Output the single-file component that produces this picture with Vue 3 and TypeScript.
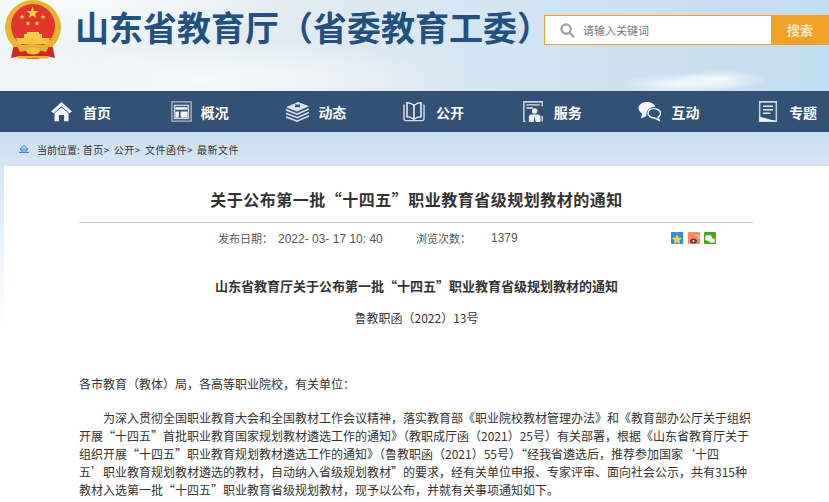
<script setup lang="ts">
const navItems = [
  { label: '首页', icon: 'home', width: 21, gap: 11 },
  { label: '概况', icon: 'window', width: 21, gap: 9 },
  { label: '动态', icon: 'stack', width: 24, gap: 9 },
  { label: '公开', icon: 'book', width: 24, gap: 10 },
  { label: '服务', icon: 'person', width: 20, gap: 11 },
  { label: '互动', icon: 'chat', width: 23, gap: 10 },
  { label: '专题', icon: 'doc', width: 20, gap: 11 },
]
const crumbs = ['首页>', '公开>', '文件函件>', '最新文件']

// five pointed star for the emblem, outer radius r
function star(cx: number, cy: number, r: number): string {
  const pts: string[] = []
  for (let i = 0; i < 10; i++) {
    const rad = i % 2 === 0 ? r : r * 0.4
    const a = (Math.PI / 5) * i - Math.PI / 2
    pts.push(`${(cx + rad * Math.cos(a)).toFixed(2)},${(cy + rad * Math.sin(a)).toFixed(2)}`)
  }
  return pts.join(' ')
}
const smallStars = [
  [22, 17],
  [43, 17],
  [28, 23.5],
  [37, 23.5],
]
</script>

<template>
  <div class="page" lang="zh-CN">
    <header class="top">
      <div class="brand">
        <svg class="emblem" viewBox="5 0 56 60" width="56" height="60">
          <path d="M14 44 L11 58 L20 56 L28 59 L38 59 L46 56 L55 58 L52 44 Z" fill="#cf2a20" />
          <path d="M5 28 A28 28 0 1 1 61 28 Q60 40 52 47 L14 47 Q6 40 5 28 Z" fill="#e8b233" />
          <circle cx="33" cy="26" r="22" fill="#e2352b" />
          <polygon :points="star(32.5, 13, 6.5)" fill="#f6d04a" />
          <polygon v-for="s in smallStars" :key="s.join()" :points="star(s[0], s[1], 2.8)" fill="#f6d04a" />
          <path d="M27 32 H39 V34 H42 V38 H24 V34 H27 Z" fill="#f6d04a" />
          <path d="M16 38 H50 L48 44 H18 Z" fill="#f3c642" />
          <path d="M17 46 Q33 42 49 46 L46 52 Q33 48 20 52 Z" fill="#e8b233" />
          <ellipse cx="33" cy="51" rx="7" ry="3.5" fill="#f1c33c" />
          <rect x="18" y="56" width="30" height="2.500" fill="#e8b233" />
        </svg>
        <h1 class="site-name">山东省教育厅（省委教育工委）</h1>
      </div>
      <div class="search">
        <svg class="search-icon" viewBox="0 0 16 16" width="15" height="15">
          <circle cx="6.500" cy="6.500" r="5" fill="none" stroke="#a3a3a3" stroke-width="2.500" />
          <line x1="10.500" y1="10.500" x2="15" y2="15" stroke="#a3a3a3" stroke-width="2.500" />
        </svg>
        <span class="search-text">请输入关键词</span>
        <span class="search-btn">搜索</span>
      </div>
    </header>
    <nav class="nav">
      <a v-for="item in navItems" :key="item.label" class="nav-item">
        <span class="nav-slot">
          <svg
            viewBox="0 0 24 24"
            preserveAspectRatio="none"
            height="21"
            :width="item.width"
            :style="{ marginRight: item.gap + 'px' }"
          >
            <template v-if="item.icon === 'home'">
              <path d="M12 1 L24 12 L21 14 L12 6 L3 14 L0 12 Z" fill="#f2f4f6" />
              <path d="M4 14 L12 7.500 L20 14 V23 H15 V16 H9 V23 H4 Z" fill="#f2f4f6" />
            </template>
            <template v-else-if="item.icon === 'window'">
              <rect x="1" y="1" width="22" height="22" fill="none" stroke="#aebac6" stroke-width="1.500" />
              <rect x="4" y="5" width="16" height="15" fill="none" stroke="#cfd6de" stroke-width="1.500" />
              <rect x="5" y="7" width="14" height="3" fill="#f2f4f6" />
              <rect x="5" y="12" width="4" height="7" fill="#f2f4f6" />
              <rect x="11" y="12" width="8" height="7" fill="#f2f4f6" />
            </template>
            <template v-else-if="item.icon === 'stack'">
              <path d="M13 1 L24 6 L12 12 L1 7 Z" fill="#dfe4ea" />
              <path d="M1 10 L12 15 L24 9 M1 14 L12 19 L24 13 M1 18 L12 23 L24 17" fill="none" stroke="#dfe4ea" stroke-width="1.800" />
              <rect x="10" y="4" width="5" height="3" fill="#33527a" />
            </template>
            <template v-else-if="item.icon === 'book'">
              <path d="M2 4 V20 Q2 22.500 4.500 22.500 H19.500 Q22 22.500 22 20 V4" fill="none" stroke="#cfd6de" stroke-width="1.500" />
              <path d="M5 2 Q9 2 12 5 Q15 2 19 2 V18 Q15 18 12 21 Q9 18 5 18 Z M12 5 V21" fill="none" stroke="#e6eaee" stroke-width="1.600" />
            </template>
            <template v-else-if="item.icon === 'person'">
              <path d="M3 23.500 H1 V1 H23 V6 M23 17 V23.500" fill="none" stroke="#cfd6de" stroke-width="1.800" />
              <path d="M4 4.500 H20 M4 8 H12" stroke="#dfe4ea" stroke-width="1.500" />
              <circle cx="14" cy="11.500" r="3.200" fill="#f2f4f6" />
              <path d="M7 24 V18 Q7 15.500 10 15.500 H18 Q21 15.500 21 18 V24 H15.200 L14 17 L12.800 24 Z" fill="#f2f4f6" />
            </template>
            <template v-else-if="item.icon === 'chat'">
              <path d="M9.500 1 C14 1 18 4 18 6.500 C13 6.500 8 10 9 17 L3 20 L4.500 14.500 C2 13 0.500 10.500 0.500 8 C0.500 4 4.500 1 9.500 1 Z" fill="#f2f4f6" />
              <path d="M16 8.500 C20 8.500 23.500 11 23.500 14 C23.500 16 22.500 17.500 21 18.500 L22 22 L17.500 19.500 C13.500 19.500 10.500 17 10.500 14 C10.500 11 13 8.500 16 8.500 Z" fill="none" stroke="#eef1f4" stroke-width="1.600" />
            </template>
            <template v-else>
              <path d="M2 1 H22 V23 H2 Z" fill="none" stroke="#cfd6de" stroke-width="1.800" />
              <path d="M6 6 H18 M6 10 H18 M6 14 H15" stroke="#e6eaee" stroke-width="1.600" />
              <path d="M2 18 L22 23 H2 Z" fill="#f2f4f6" />
            </template>
          </svg>
        </span>
        <span>{{ item.label }}</span>
      </a>
    </nav>
    <div class="crumbs">
      <svg viewBox="0 0 10 8" width="10" height="8" class="crumb-icon">
        <path d="M5 0.500 L9 4 H1 Z M2 4 V6 H8 V4 M0 7.500 H10" fill="none" stroke="#3b87c9" stroke-width="1" />
      </svg>
      <span class="crumb-label">当前位置:</span>
      <span v-for="c in crumbs" :key="c" class="crumb">{{ c }}</span>
    </div>
    <main class="article">
      <h2 class="title">关于公布第一批“十四五”职业教育省级规划教材的通知</h2>
      <div class="meta">
        <span class="date">发布日期：<span class="stamp">2022- 03- 17 10: 40</span></span>
        <span class="views">浏览次数：</span>
        <span class="count">1379</span>
        <span class="share">
          <i class="share-icon qzone"><svg viewBox="0 0 12 12" width="12" height="12"><polygon points="6,1 7.500,4.500 11,5 8.500,7.500 9,11 6,9.200 3,11 3.500,7.500 1,5 4.500,4.500" fill="#f6d24a" /></svg></i>
          <i class="share-icon weibo"><svg viewBox="0 0 12 12" width="12" height="12"><ellipse cx="5.500" cy="8" rx="3.500" ry="2.500" fill="#5d3a3a" /><circle cx="5.500" cy="8" r="1" fill="#fff" /><path d="M7.500 2.500 H10.500 V5.500" fill="none" stroke="#fbd0a8" stroke-width="1.200" /></svg></i>
          <i class="share-icon wechat"><svg viewBox="0 0 12 12" width="12" height="12"><ellipse cx="4.500" cy="5" rx="3.500" ry="3" fill="#fff" /><ellipse cx="8" cy="7.500" rx="3" ry="2.500" fill="#e6f5dc" /></svg></i>
        </span>
      </div>
      <p class="doc-title">山东省教育厅关于公布第一批“十四五”职业教育省级规划教材的通知</p>
      <p class="doc-no">鲁教职函（2022）13号</p>
      <p class="to">各市教育（教体）局，各高等职业院校，有关单位：</p>
      <p class="body">为深入贯彻全国职业教育大会和全国教材工作会议精神，落实教育部《职业院校教材管理办法》和《教育部办公厅关于组织开展“十四五”首批职业教育国家规划教材遴选工作的通知》（教职成厅函（2021）25号）有关部署，根据《山东省教育厅关于组织开展“十四五”职业教育规划教材遴选工作的通知》（鲁教职函（2021）55号）“经我省遴选后，推荐参加国家‘十四五’职业教育规划教材遴选的教材，自动纳入省级规划教材”的要求，经有关单位申报、专家评审、面向社会公示，共有315种教材入选第一批“十四五”职业教育省级规划教材，现予以公布，并就有关事项通知如下。</p>
    </main>
  </div>
</template>

<style>
html, body { margin: 0; background: #fff; }
</style>

<style scoped>
.page {
  width: 829px;
  height: 502px;
  overflow: hidden;
  font-family: "Noto Sans CJK SC", "Liberation Sans", sans-serif;
  color: #333;
  background: linear-gradient(180deg, #d6e6f4 0, #d6e6f4 165px, #ffffff 330px);
}
.top {
  height: 91px;
  display: flex;
  box-sizing: border-box;
  padding-left: 5px;
  background:
    radial-gradient(ellipse 50px 10px at 720px 80px, #f3f9fd 0%, rgba(243, 249, 253, 0) 100%),
    radial-gradient(ellipse 60px 11px at 680px 84px, #f3f9fd 0%, rgba(243, 249, 253, 0) 100%),
    radial-gradient(ellipse 260px 40px at 200px 80px, #f6f9fb 0%, rgba(246, 249, 251, 0) 100%),
    radial-gradient(ellipse 200px 50px at 80px 0, #f8fafb 0%, rgba(248, 250, 251, 0) 100%),
    linear-gradient(90deg, #eef4f7 0%, #dfeaf1 40%, #d3e5f3 60%, #c3dcef 100%);
}
.brand { display: flex; align-items: flex-start; gap: 14px; width: 539px; flex: none; }
.emblem { flex: none; }
.site-name {
  margin: 2px 0 0;
  font-size: 34px;
  line-height: 50px;
  font-weight: 700;
  color: #24507f;
  white-space: nowrap;
}
.search {
  flex: none;
  display: flex;
  align-items: center;
  width: 285px;
  height: 30px;
  margin-top: 15px;
  border: 1px solid #f2a128;
  box-sizing: border-box;
  background: #fff;
}
.search-icon { margin: 0 8px 0 15px; }
.search-text { flex: 1; font-size: 11px; color: #777; }
.search-btn {
  width: 58px;
  height: 30px;
  line-height: 30px;
  margin-right: -1px;
  background: #f2a128;
  color: #fbe6c4;
  text-align: center;
  font-size: 13px;
  font-weight: 700;
}
.nav {
  height: 41px;
  background: #335075;
  display: flex;
  align-items: center;
  padding-left: 49px;
}
.nav-item {
  display: flex;
  align-items: center;
  width: 117.7px;
  flex: none;
  color: #fff;
  font-size: 14px;
  font-weight: 700;
}
.nav-slot { display: flex; justify-content: flex-end; width: 34px; flex: none; }
.crumbs {
  height: 34px;
  background: linear-gradient(180deg, #cbdff0, #d6e6f4);
  display: flex;
  align-items: center;
  padding-left: 19px;
  font-size: 10px;
  color: #333;
}
.crumb-icon { margin-right: 8px; }
.crumb-label { margin-right: 3px; }
.crumb { margin-right: 4px; letter-spacing: 0.5px; }
.article {
  margin-left: 4px;
  height: 336px;
  background: #fff;
  padding: 0 75px;
  overflow: hidden;
}
.title {
  margin: 21px 0 0;
  padding-bottom: 11px;
  border-bottom: 1px solid #ccc;
  text-align: center;
  font-size: 16px;
  line-height: 24px;
  font-weight: 700;
  letter-spacing: 0.5px;
}
.meta {
  display: flex;
  align-items: center;
  margin: 5px 0 0 139px;
  height: 20px;
  font-size: 11px;
  color: #555;
}
.stamp { margin-left: 5px; font-family: "Liberation Sans", sans-serif; font-size: 12px; }
.date { width: 198px; flex: none; }
.views { width: 75px; flex: none; }
.count { width: 40px; flex: none; font-family: "Liberation Sans", sans-serif; font-size: 12px; }
.share { display: flex; gap: 4.5px; margin-left: 140px; flex: none; }
.share-icon { display: block; width: 12px; height: 12px; border-radius: 1px; }
.qzone { background: #2f8fd8; }
.weibo { background: #f58a6a; }
.wechat { background: #49a81f; }
.doc-title { margin: 29px 0 0; text-align: center; font-size: 13px; line-height: 18px; font-weight: 700; }
.doc-no { margin: 14px 0 0; text-align: center; font-size: 12px; line-height: 18px; }
.to { margin: 47px 0 0; font-size: 12px; line-height: 19px; }
.body { margin: 16px 0 0; font-size: 12px; line-height: 18px; text-indent: 24px; }
</style>
